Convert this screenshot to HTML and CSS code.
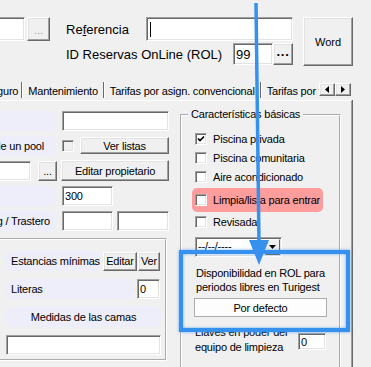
FILE: index.html
```html
<!DOCTYPE html>
<html lang="es">
<head>
    <meta charset="UTF-8">
    <meta name="viewport" content="width=device-width, initial-scale=1.0">
    <title>Ficha de alojamiento</title>
    <link rel="stylesheet" href="styles.css">
</head>
<body>
    <!-- cabecera -->
    <div class="top">
        <div class="top-left">
            <input class="edit name" type="text">
            <button class="btn dots-off" disabled>...</button>
        </div>
        <div class="ref">
            <div class="ref-row">
                <span class="ref-lbl">Re<u>f</u>erencia</span>
                <div class="edit ref-input"><span class="caret"></span></div>
            </div>
            <div class="ref-row">
                <span class="rol-lbl">ID Reservas OnLine (ROL)</span>
                <input class="edit rol-input" type="text" value="99">
                <button class="btn rol-btn">···</button>
            </div>
        </div>
        <button class="btn word">Word</button>
    </div>

    <!-- pestañas -->
    <div class="tabbar">
        <div class="tabs">
            <span class="tab first">Seguro</span>
            <span class="tab">Mantenimiento</span>
            <span class="tab">Tarifas por asign. convencional</span>
            <span class="tab">Tarifas por temporada</span>
        </div>
        <div class="tab-scroll">
            <button class="btn arrow"><svg width="4" height="7" viewBox="0 0 4 7"><path d="M4 0V7L0 3.5Z"/></svg></button>
            <button class="btn arrow"><svg width="4" height="7" viewBox="0 0 4 7"><path d="M0 0V7L4 3.5Z"/></svg></button>
        </div>
    </div>

    <div class="page">
        <div class="left-col">
            <div class="row">
                <span class="lbl"></span>
                <input class="edit w-long" type="text">
            </div>
            <div class="row">
                <span class="lbl lbl-r">Forma parte de un pool</span>
                <span class="box off"></span>
                <button class="btn lists">Ver listas</button>
            </div>
            <div class="row">
                <input class="edit owner" type="text">
                <button class="btn small-dots">...</button>
                <button class="btn owner-btn">Editar propietario</button>
            </div>
            <div class="row">
                <span class="lbl"></span>
                <input class="edit w-num" type="text" value="300">
            </div>
            <div class="row">
                <span class="lbl lbl-r near">Parking / Trastero</span>
                <input class="edit w-num" type="text">
                <input class="edit w-num2" type="text">
            </div>

            <!-- camas y estancias -->
            <div class="group rooms">
                <div class="g-row">
                    <span class="cap stays">Estancias mínimas</span>
                    <button class="btn b-edit">Editar</button>
                    <button class="btn b-see">Ver</button>
                </div>
                <div class="g-row">
                    <span class="cap bunks">Literas</span>
                    <input class="edit w-tiny" type="text" value="0">
                </div>
                <div class="g-row">
                    <span class="cap beds">Medidas de las camas</span>
                </div>
                <div class="g-row">
                    <input class="edit w-beds" type="text">
                </div>
            </div>
        </div>

        <fieldset class="basics">
            <legend>Características básicas</legend>
            <div class="chk">
                <span class="box"><svg width="8" height="8" viewBox="0 0 8 8"><path d="M1 3.5L3 5.5L7 1.5" fill="none" stroke="#000" stroke-width="1.7"/></svg></span>
                Piscina privada
            </div>
            <div class="chk"><span class="box"></span>Piscina comunitaria</div>
            <div class="chk"><span class="box"></span>Aire acondicionado</div>
            <div class="chk warn"><span class="box"></span>Limpia/lista para entrar</div>
            <div class="chk"><span class="box"></span>Revisada</div>
            <div class="date">
                <span class="date-text">--/--/----</span>
                <span class="drop"><svg width="7" height="4" viewBox="0 0 7 4"><path d="M0 0H7L3.5 4Z"/></svg></span>
            </div>
            <p class="rol-note">Disponibilidad en ROL para<br>periodos libres en Turigest</p>
            <button class="flat">Por defecto</button>
            <div class="keys">
                <p>Llaves en poder del<br>equipo de limpieza</p>
                <input class="edit w-keys" type="text" value="0">
            </div>
        </fieldset>
    </div>

    <!-- marca de la captura -->
    <div class="highlight"></div>
    <svg class="pointer" width="371" height="367" viewBox="0 0 371 367">
        <line x1="256" y1="3" x2="259" y2="244" stroke="#3590ee" stroke-width="3.5"/>
        <path d="M249 240H269L259 265Z" fill="#3590ee"/>
    </svg>
</body>
</html>
```

FILE: styles.css
```css
* {
    margin: 0;
    padding: 0;
    box-sizing: border-box;
}

html, body {
    width: 371px;
    height: 367px;
    overflow: hidden;
}

body {
    position: relative;
    background: #f0f0f0;
    font-family: "Liberation Sans", Arial, sans-serif;
    font-size: 11px;
    letter-spacing: -0.2px;
    color: #000;
}

/* controles estilo windows clasico */
.edit {
    display: block;
    height: 20px;
    background: #fff;
    border: 1px solid;
    border-color: #a0a0a0 #fff #fff #a0a0a0;
    box-shadow: inset 1px 1px 0 #696969, inset -1px -1px 0 #e3e3e3;
    font: inherit;
    letter-spacing: inherit;
    padding: 0 2px;
    outline: none;
    color: #000;
}

.btn {
    display: flex;
    align-items: center;
    justify-content: center;
    flex: none;
    padding: 0;
    background: #f0f0f0;
    border: 1px solid;
    border-color: #fff #696969 #696969 #fff;
    box-shadow: inset -1px -1px 0 #a0a0a0, inset 1px 1px 0 #e3e3e3;
    font: inherit;
    letter-spacing: inherit;
    color: #000;
}

.box {
    display: flex;
    align-items: center;
    justify-content: center;
    flex: none;
    width: 12px;
    height: 12px;
    background: #fff;
    border: 1px solid;
    border-color: #a0a0a0 #fff #fff #a0a0a0;
    box-shadow: inset 1px 1px 0 #696969, inset -1px -1px 0 #e3e3e3;
}

.box.off {
    background: #f0f0f0;
}

/* cabecera */
.top {
    display: flex;
    align-items: flex-start;
    height: 80px;
    padding-top: 17px;
    font-size: 13px;
    letter-spacing: 0;
}

.top-left {
    display: flex;
    gap: 2px;
    margin-left: -35px;
}

.top-left .name {
    width: 60px;
    height: 24px;
}

.dots-off {
    width: 23px;
    height: 24px;
    color: #a0a0a0;
    font-size: 11px;
    align-items: flex-end;
    padding-bottom: 4px;
}

.ref {
    display: flex;
    flex-direction: column;
    gap: 2px;
    margin-left: 16px;
}

.ref-row {
    display: flex;
    align-items: center;
}

.ref-lbl {
    width: 80px;
}

.ref-input {
    width: 147px;
    height: 24px;
    padding: 4px 3px;
}

.caret {
    display: block;
    width: 1px;
    height: 15px;
    background: #000;
}

.rol-lbl {
    width: 167px;
}

.rol-input {
    width: 40px;
    height: 22px;
}

.rol-btn {
    width: 20px;
    height: 22px;
    font-weight: bold;
}

.word {
    width: 50px;
    height: 49px;
    margin-left: 10px;
    font-size: 11px;
}

/* pestañas */
.tabbar {
    display: flex;
    height: 18px;
    margin-top: 2px;
}

.tabs {
    display: flex;
    width: 319px;
    overflow: hidden;
    white-space: nowrap;
}

.tab {
    flex: none;
    height: 16px;
    line-height: 18px;
    padding: 0 5px;
    border-left: 1px solid #fff;
    border-right: 1px solid #696969;
}

.tab.first {
    margin-left: -21px;
    padding-right: 3px;
    border-left: none;
}

.tab-scroll {
    display: flex;
    margin-top: 1px;
}

.arrow {
    width: 16px;
    height: 13px;
}

/* hoja de la pestaña */
.page {
    display: flex;
    width: 352px;
    height: 267px;
    padding-top: 9px;
    border-top: 1px solid #fff;
    border-right: 1px solid #a0a0a0;
    box-shadow: 1px 0 0 #696969;
}

.left-col {
    display: flex;
    flex-direction: column;
    gap: 4px;
    flex: none;
    width: 234px;
    margin-left: -65px;
}

.row {
    display: flex;
    align-items: center;
    gap: 7px;
    height: 21px;
}

.lbl {
    display: flex;
    align-items: center;
    flex: none;
    width: 120px;
    height: 20px;
    padding: 0 5px;
    background: #eeeefb;
    border-radius: 5px;
    white-space: nowrap;
}

.lbl-r {
    justify-content: flex-end;
    padding-right: 11px;
}

.lbl-r.near {
    padding-right: 5px;
}

.w-long {
    width: 107px;
}

.lists {
    width: 89px;
    height: 17px;
    margin-left: -1px;
}

.owner {
    width: 96px;
}

.small-dots {
    width: 19px;
    height: 20px;
}

.owner-btn {
    width: 108px;
    height: 21px;
    margin-left: -3px;
}

.w-num {
    width: 51px;
}

.w-num2 {
    width: 52px;
    margin-left: -3px;
}

/* marcos agrupados */
.group {
    border: 2px groove #fff;
}

.rooms {
    width: 177px;
    margin: 3px 0 0 55px;
    padding: 11px 0 4px 14px;
}

.g-row {
    display: flex;
    align-items: center;
    gap: 4px;
    height: 20px;
    margin-bottom: 8px;
}

.g-row:last-child {
    margin-bottom: 0;
}

.cap {
    display: flex;
    align-items: center;
    height: 20px;
    padding: 0 5px;
    background: #eeeefb;
    border-radius: 5px;
    white-space: nowrap;
}

.stays {
    width: 93px;
}

.b-edit {
    width: 34px;
    height: 19px;
}

.b-see {
    width: 22px;
    height: 19px;
    margin-left: -3px;
}

.bunks {
    width: 127px;
}

.w-tiny {
    width: 23px;
}

.beds {
    width: 155px;
    justify-content: center;
}

.w-beds {
    width: 155px;
}

.basics {
    flex: none;
    width: 161px;
    height: 280px;
    margin: -3px 0 0 11px;
    padding: 7px 0 0 13px;
    border: 2px groove #fff;
}

.basics legend {
    margin-left: -7px;
    padding: 0 3px;
    line-height: 15px;
}

.chk {
    display: flex;
    align-items: center;
    gap: 6px;
    height: 19px;
    white-space: nowrap;
}

.chk.warn {
    width: 131px;
    height: 24px;
    margin: 2px 0 0 -3px;
    padding-left: 3px;
    background: #ff9c9c;
    border-radius: 5px;
}

.date {
    display: flex;
    width: 87px;
    height: 20px;
    margin-top: 6px;
    background: #fff;
    border: 1px solid;
    border-color: #a0a0a0 #fff #fff #a0a0a0;
    box-shadow: inset 1px 1px 0 #696969, inset -1px -1px 0 #e3e3e3;
}

.date-text {
    flex: 1;
    padding: 2px 0 0 2px;
}

.drop {
    display: flex;
    align-items: center;
    justify-content: center;
    width: 15px;
    margin: 1px 1px 1px 0;
    background: #f0f0f0;
    border: 1px solid;
    border-color: #fff #696969 #696969 #fff;
}

.rol-note {
    margin-top: 9px;
    padding-left: 1px;
    line-height: 14px;
}

.flat {
    display: block;
    width: 133px;
    height: 19px;
    margin: 4px 0 0 -1px;
    background: #fdfdfd;
    border: 1px solid #adadad;
    font: inherit;
    letter-spacing: inherit;
}

.keys {
    display: flex;
    align-items: flex-start;
    margin-top: 8px;
}

.keys p {
    width: 103px;
    line-height: 15px;
}

.w-keys {
    width: 28px;
    height: 17px;
    margin-top: 8px;
}

/* recuadro y flecha azules */
.highlight {
    position: absolute;
    left: 179px;
    top: 250px;
    width: 171px;
    height: 82px;
    border: 4px solid #3590ee;
    box-shadow: 0 0 3px rgba(53, 144, 238, 0.7), inset 0 0 3px rgba(53, 144, 238, 0.7);
}

.pointer {
    position: absolute;
    left: 0;
    top: 0;
}
```
